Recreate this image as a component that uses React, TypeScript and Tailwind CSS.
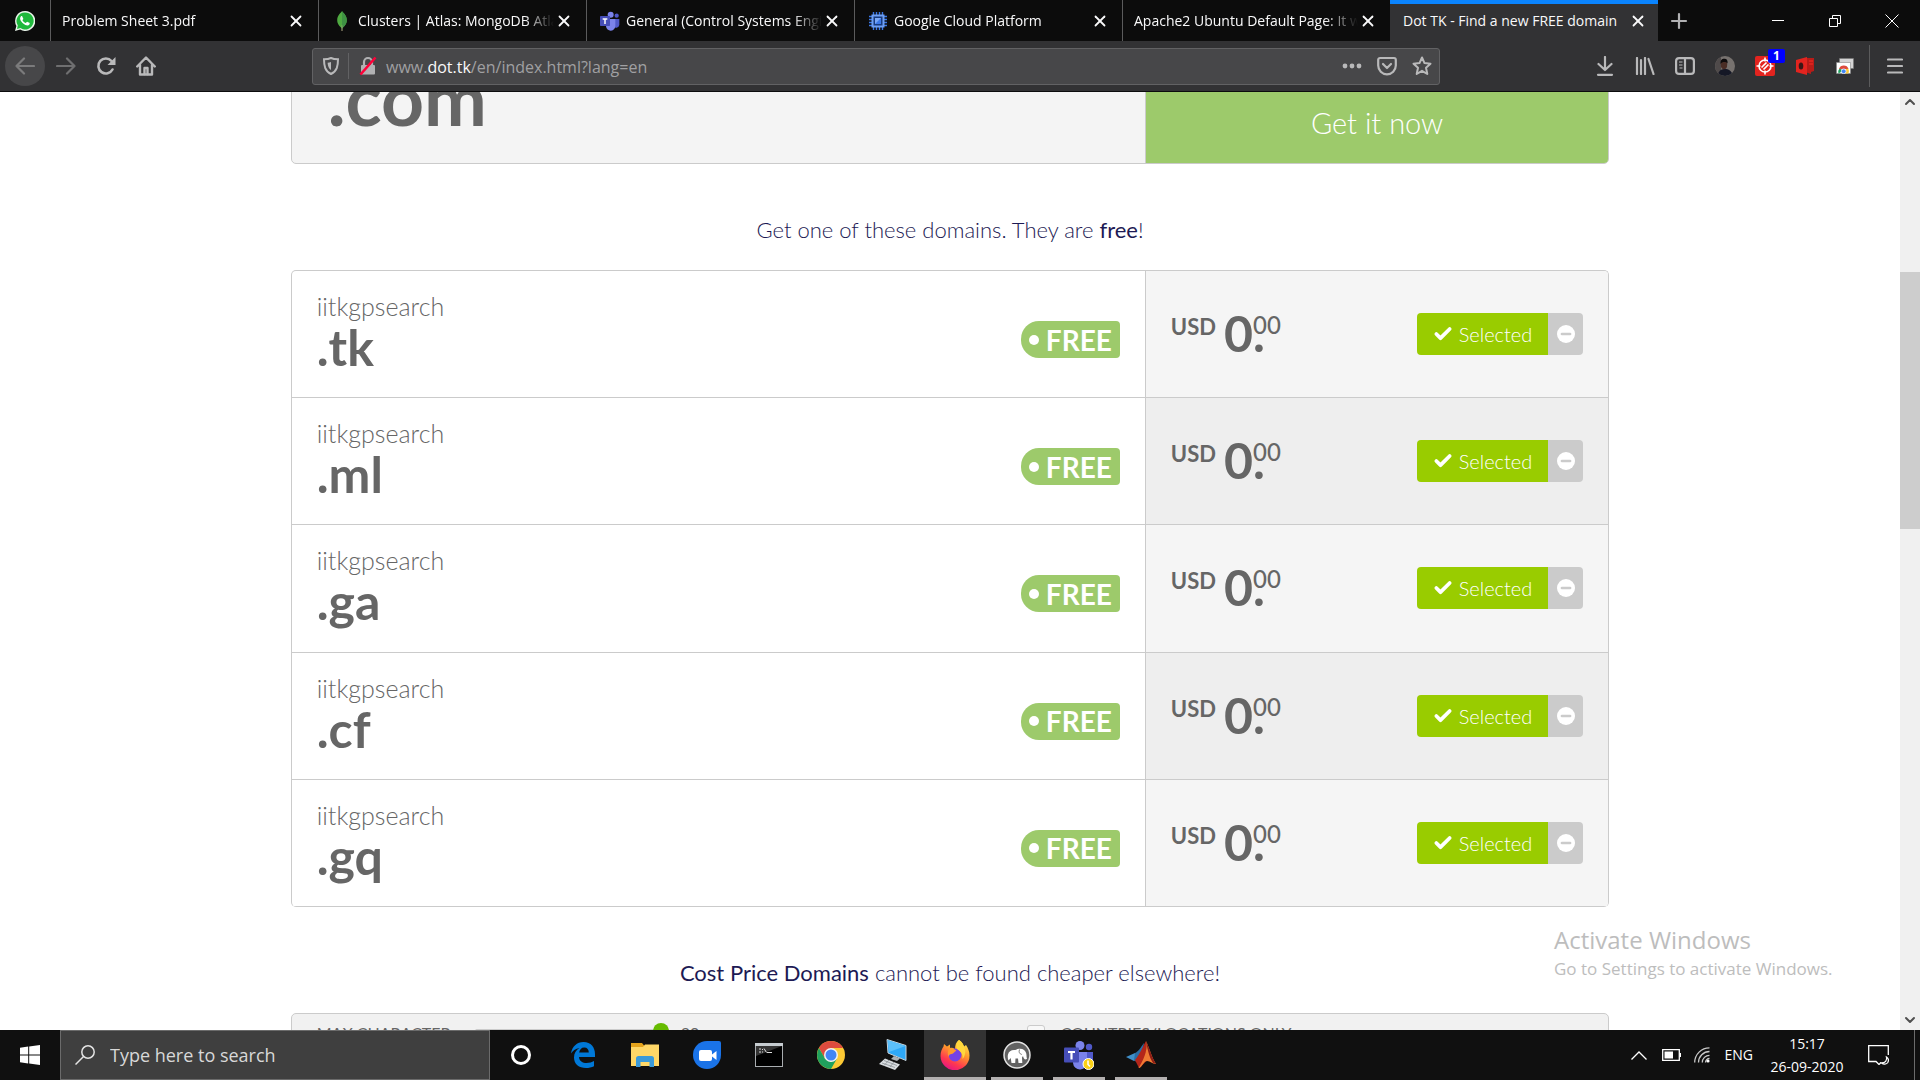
import type { ReactNode } from "react";
import { Check, X, Plus, Minus, ChevronUp, ChevronDown } from "lucide-react";

const UI = "font-['Open_Sans','Noto_Sans',sans-serif]";

function WhatsAppIcon() {
  return (
    <svg viewBox="0 0 20 20" className="size-5" aria-hidden="true">
      <path d="M10 0a10 10 0 0 0-8.600 15L0 20l5.200-1.400A10 10 0 1 0 10 0z" fill="#e9f5ea" />
      <path d="M10 1.500a8.500 8.500 0 0 0-7.200 13L2 18l3.500-.9A8.500 8.500 0 1 0 10 1.500z" fill="#1fb93c" />
      <path d="M7.300 5.400c-.3-.6-.9-.5-1.300-.1-2.100 2.300-.1 5.300 2.200 7.200 2.300 1.900 5 2.700 6.200.9.500-.8.400-1.400 0-1.600l-1.900-.9c-.4-.2-.7 0-1 .4-.6.900-.9.800-1.900.2C8.500 10.800 7.700 9.900 7.500 9.300c-.1-.5.900-1 .8-1.600z" fill="#fff" />
    </svg>
  );
}

function MongoIcon() {
  return (
    <svg viewBox="0 0 20 20" className="size-5" aria-hidden="true">
      <path d="M10 0c.8 1.700 4.800 4 4.800 9 0 4-2.300 6.200-4.300 7.900L10 20l-.5-3.100C7.500 15.200 5.200 13 5.200 9 5.200 4 9.200 1.700 10 0z" fill="#4faa41" />
      <path d="M10 0c.8 1.700 4.800 4 4.800 9 0 4-2.300 6.200-4.300 7.900L10 17z" fill="#3f9143" />
      <path d="M9.800 14h.4l.3 6h-1z" fill="#b8a78a" />
    </svg>
  );
}

function TeamsIcon({ large = false }: { large?: boolean }) {
  return (
    <svg viewBox="0 0 30 30" className={large ? "size-[30px]" : "size-5"} aria-hidden="true">
      <circle cx="16" cy="5.500" r="4.500" fill="#7b83eb" />
      <circle cx="25" cy="7" r="3.200" fill="#5059c9" />
      <path d="M20 12h9v9a5 5 0 0 1-9 2z" fill="#5059c9" />
      <path d="M9 12h14v10a7 7 0 0 1-14 1z" fill="#7b83eb" />
      <rect x="0" y="7.500" width="15" height="15" rx="1" fill="#464eb8" />
      <path d="M4 11h7v2H8.600v6.500H6.400V13H4z" fill="#fff" />
      {large && (
        <>
          <circle cx="24.500" cy="24" r="5.500" fill="#fcd116" stroke="#fff" strokeWidth="1" />
          <path d="M24 20.500v4l2 2" stroke="#fff" strokeWidth="1.500" fill="none" />
        </>
      )}
    </svg>
  );
}

function ChipIcon() {
  return (
    <svg viewBox="0 0 20 20" className="size-5" aria-hidden="true">
      <path d="M5.500 1v18M8.500 1v18M11.500 1v18M14.500 1v18M1 5.500h18M1 8.500h18M1 11.500h18M1 14.500h18" stroke="#3b78e7" strokeWidth="1.400" />
      <rect x="3.500" y="3.500" width="13" height="13" fill="#6f9ff2" />
      <rect x="5.500" y="5.500" width="9" height="9" fill="#173a7d" />
      <rect x="7" y="7" width="6" height="6" fill="#7aa7f5" />
      <path d="M13 7v6H7z" fill="#3b78e7" />
    </svg>
  );
}

function ChromeIcon({ className }: { className: string }) {
  return (
    <svg viewBox="0 0 28 28" className={className} aria-hidden="true">
      <circle cx="14" cy="14" r="14" fill="#fcc934" />
      <path d="M14 0A14 14 0 0 0 1.900 7L8 17.500 14 7h12.100A14 14 0 0 0 14 0z" fill="#dd4b3e" />
      <path d="M1.900 7A14 14 0 0 0 14 28l6-10.500L14 21l-6-3.500z" fill="#1fa15d" />
      <circle cx="14" cy="14" r="7" fill="#f1f1f1" />
      <circle cx="14" cy="14" r="5.500" fill="#4285f4" />
    </svg>
  );
}

type TabData = { title: string; icon?: ReactNode; active?: boolean };

const tabs: TabData[] = [
  { title: "Problem Sheet 3.pdf" },
  { title: "Clusters | Atlas: MongoDB Atlas", icon: <MongoIcon /> },
  { title: "General (Control Systems Engineering)", icon: <TeamsIcon /> },
  { title: "Google Cloud Platform", icon: <ChipIcon /> },
  { title: "Apache2 Ubuntu Default Page: It works" },
  { title: "Dot TK - Find a new FREE domain", active: true },
];

function Tab({ title, icon, active }: TabData) {
  return (
    <div
      className={
        active
          ? "flex w-[268px] min-w-0 items-center border-t-4 border-[#0a84ff] bg-[#323234] pr-[10px] pb-1 pl-[13px]"
          : "flex w-[268px] min-w-0 items-center border-l border-[#5b5b5c] pr-3 pl-[11px]"
      }
    >
      {icon && <span className="mr-1 flex w-6 shrink-0 justify-center">{icon}</span>}
      <span
        className={
          active
            ? "min-w-0 flex-1 overflow-hidden whitespace-nowrap"
            : "min-w-0 flex-1 overflow-hidden whitespace-nowrap [mask-image:linear-gradient(to_right,black_85%,transparent)]"
        }
      >
        {title}
      </span>
      <button type="button" aria-label={`Close ${title}`} className="flex w-5 shrink-0 justify-center">
        <X className="size-[18px]" strokeWidth={2.4} />
      </button>
    </div>
  );
}

function TabStrip() {
  return (
    <div className="flex h-[41px] shrink-0 bg-[#0c0c0c] text-sm text-[#f9f9fa]">
      <div className="flex w-[50px] items-center justify-center">
        <WhatsAppIcon />
      </div>
      {tabs.map((t) => (
        <Tab key={t.title} {...t} />
      ))}
      <button type="button" aria-label="New tab" className="flex w-[42px] items-center justify-center text-[#b1b1b3]">
        <Plus className="size-6" strokeWidth={2.2} />
      </button>
      <div className="ml-auto flex">
        <button type="button" aria-label="Minimize" className="flex w-[57px] items-center justify-center">
          <span className="h-px w-3 bg-white" />
        </button>
        <button type="button" aria-label="Restore" className="flex w-[57px] items-center justify-center">
          <svg viewBox="0 0 12 12" className="size-3" fill="none" stroke="#fff">
            <path d="M.5 3.500h8v8h-8zM3.500 3V.5h8v8H9" />
          </svg>
        </button>
        <button type="button" aria-label="Close window" className="flex w-[57px] items-center justify-center">
          <svg viewBox="0 0 14 14" className="size-3.5" stroke="#fff">
            <path d="m.5.5 13 13m0-13-13 13" />
          </svg>
        </button>
      </div>
    </div>
  );
}

function ToolButton({ label, children }: { label: string; children: ReactNode }) {
  return (
    <button type="button" aria-label={label} className="relative flex w-10 items-center justify-center">
      {children}
    </button>
  );
}

function Toolbar() {
  return (
    <div className="flex h-[51px] shrink-0 items-center border-b border-[#0c0c0d] bg-[#323234] pl-[5px] text-[#b9b9ba]">
      <button type="button" aria-label="Back" className="flex size-10 items-center justify-center rounded-full bg-[#474749] text-[#7b7b7c]">
        <svg viewBox="0 0 20 20" className="size-5" fill="none" stroke="currentColor" strokeWidth="2.200" strokeLinecap="round" strokeLinejoin="round">
          <path d="M19 10H1.500M9 2.500 1.500 10 9 17.500" />
        </svg>
      </button>
      <button type="button" aria-label="Forward" className="ml-px flex size-10 items-center justify-center text-[#6f6f70]">
        <svg viewBox="0 0 20 20" className="size-5" fill="none" stroke="currentColor" strokeWidth="2.200" strokeLinecap="round" strokeLinejoin="round">
          <path d="M1 10h17.500M11 2.500l7.500 7.500-7.500 7.500" />
        </svg>
      </button>
      <button type="button" aria-label="Reload" className="flex size-10 items-center justify-center">
        <svg viewBox="0 0 20 20" className="size-5" fill="none" stroke="currentColor" strokeWidth="2.600" strokeLinecap="round">
          <path d="M16.500 13.500A7.500 7.500 0 1 1 15.500 5" />
          <path d="M19.500 1v8h-8z" fill="currentColor" stroke="none" />
        </svg>
      </button>
      <button type="button" aria-label="Home" className="flex size-10 items-center justify-center">
        <svg viewBox="0 0 20 20" className="size-5" fill="none" stroke="currentColor" strokeWidth="2.400" strokeLinejoin="round" strokeLinecap="round">
          <path d="M1.200 10.500 10 1.500l8.800 9M4 8.500V18.500h12V8.500" />
          <path d="M8.500 18v-6h3v6" />
        </svg>
      </button>
      <div className="ml-[146px] flex h-[37px] min-w-0 flex-1 items-center rounded-[3px] border border-[#626264] bg-[#474749]">
        <span className="flex w-[35px] justify-center">
          <svg viewBox="0 0 16 18" className="h-[18px] w-4" fill="none" stroke="currentColor" strokeWidth="2">
            <path d="M8 1c2 1 4.500 1.300 7 1.300C15 9 14 14 8 17 2 14 1 9 1 2.300 3.500 2.300 6 2 8 1z" />
            <path d="M8 5v8c-2.300-1.500-3.200-4-3.400-7.200C5.800 5.700 7 5.400 8 5z" fill="currentColor" stroke="none" />
          </svg>
        </span>
        <span className="h-[26px] w-px bg-[#626264]" />
        <span className="flex w-[37px] justify-center">
          <svg viewBox="0 0 18 20" className="h-5 w-[18px]" fill="none">
            <rect x="2" y="9" width="14" height="9.500" rx="1" fill="#b1b1b3" />
            <path d="M5 9V6a4 4 0 0 1 8 0v3" stroke="#b1b1b3" strokeWidth="2.200" />
            <path d="M1.500 18.500 16.500 1.500" stroke="#ff0039" strokeWidth="2.600" />
          </svg>
        </span>
        <div className={`${UI} relative min-w-0 flex-1 pt-0.5 text-base text-[#a0a0a2]`}>
          <input
            type="text"
            aria-label="Address"
            className="absolute inset-0 w-full bg-transparent text-transparent outline-none"
          />
          <span>
            www.<span className="text-[#f9f9fa]">dot.tk</span>/en/index.html?lang=en
          </span>
        </div>
        <button type="button" aria-label="Page actions" className="flex w-[35px] justify-center">
          <svg viewBox="0 0 20 6" className="h-1.5 w-5" fill="currentColor">
            <circle cx="3" cy="3" r="2.400" />
            <circle cx="10" cy="3" r="2.400" />
            <circle cx="17" cy="3" r="2.400" />
          </svg>
        </button>
        <button type="button" aria-label="Save to Pocket" className="flex w-[35px] justify-center">
          <svg viewBox="0 0 20 20" className="size-5" fill="none" stroke="currentColor" strokeWidth="2.200" strokeLinecap="round" strokeLinejoin="round">
            <path d="M3 2h14a1.800 1.800 0 0 1 1.800 1.800V9.500a8.800 8.800 0 0 1-17.600 0V3.800A1.800 1.800 0 0 1 3 2z" />
            <path d="m6 8 4 4 4-4" />
          </svg>
        </button>
        <button type="button" aria-label="Bookmark this page" className="flex w-[35px] justify-center">
          <svg viewBox="0 0 20 20" className="size-5" fill="none" stroke="currentColor" strokeWidth="2" strokeLinejoin="round">
            <path d="m10 1.500 2.500 5.600 6 .6-4.500 4 1.300 6.300L10 14.800 4.700 18 6 11.700l-4.500-4 6-.6z" />
          </svg>
        </button>
      </div>
      <div className="ml-[145px] flex h-full">
        <ToolButton label="Downloads">
          <svg viewBox="0 0 18 20" className="h-5 w-[18px]" fill="none" stroke="currentColor" strokeWidth="2.200" strokeLinecap="round" strokeLinejoin="round">
            <path d="M9 1v12.500M2.500 8 9 14l6.500-6M2 18.800h14" />
          </svg>
        </ToolButton>
        <ToolButton label="Library">
          <svg viewBox="0 0 20 18" className="h-[18px] w-5" fill="none" stroke="currentColor" strokeWidth="2.200" strokeLinecap="round">
            <path d="M2 1v16M6 3v14M10 1v16M13.500 2l5 15" />
          </svg>
        </ToolButton>
        <ToolButton label="Sidebars">
          <svg viewBox="0 0 20 18" className="h-[18px] w-5" fill="none" stroke="currentColor" strokeWidth="2.200">
            <rect x="1.100" y="1.100" width="17.800" height="15.800" rx="3" />
            <path d="M10 1v16" />
            <path d="M4 5h3.500M4 8h3.500M4.500 11h3" strokeWidth="1.200" />
          </svg>
        </ToolButton>
        <ToolButton label="Account">
          <svg viewBox="0 0 20 20" className="size-5">
            <clipPath id="avatar">
              <circle cx="10" cy="10" r="10" />
            </clipPath>
            <g clipPath="url(#avatar)">
              <rect width="20" height="20" fill="#77726f" />
              <rect width="6" height="20" fill="#4f4a4a" />
              <path d="M3 20c0-5 3-6.500 6-7s8 1 9 7z" fill="#151826" />
              <ellipse cx="9" cy="8.500" rx="3.200" ry="4.800" fill="#4a2d25" />
              <path d="M5.600 8c-.4-4 1.400-5.300 3.600-5.300S13 4 12.500 7.500C11 5.500 7 5.500 5.600 8z" fill="#0d0b0c" />
            </g>
          </svg>
        </ToolButton>
        <ToolButton label="Blocker, 1 item">
          <svg viewBox="0 0 20 20" className="size-5" fill="none" stroke="#fff" strokeWidth="1.600">
            <rect width="20" height="20" rx="2" fill="#e3241f" stroke="none" />
            <circle cx="10" cy="10" r="6" />
            <path d="M10 1.500v4M10 14.500v4M1.500 10h4M14.500 10h4M6.500 11.500l5-5M8.500 13.500l5-5" />
          </svg>
          <span className={`${UI} absolute top-2 left-[23px] flex h-[14px] w-[17px] items-center justify-center rounded-[2px] bg-[#0000ff] text-xs font-bold text-white`}>
            1
          </span>
        </ToolButton>
        <ToolButton label="Office">
          <svg viewBox="0 0 18 18" className="size-[18px]">
            <path d="M9 1h9v13l-3 1v2l-6-2z" fill="#b81c18" />
            <path d="M0 3 11 0v18L0 15z" fill="#e3241f" />
            <ellipse cx="5" cy="9" rx="2.300" ry="3.600" fill="#3b1716" />
            <path d="M13 4h4M13 7h4" stroke="#e3241f" strokeWidth="1.500" />
          </svg>
        </ToolButton>
        <ToolButton label="Store">
          <svg viewBox="0 0 18 16" className="h-4 w-[18px]">
            <path d="M3.500.5h14v10h-14z" fill="#d4d4d4" stroke="#777" strokeWidth=".6" />
            <path d="M.5 4.500h14v11H.5z" fill="#fff" stroke="#888" strokeWidth=".6" />
            <path d="M2.500 15.500a5.200 5.200 0 0 1 1-5l4 2z" fill="#1fa15d" />
            <path d="M3 11a5 5 0 0 1 9.500 0H7.500z" fill="#dd4b3e" />
            <path d="M12.300 10.800a5.500 5.500 0 0 1 .2 4.700H9l1-4.500z" fill="#fcc934" />
            <circle cx="7.700" cy="13.300" r="2.400" fill="#4285f4" stroke="#fff" strokeWidth=".7" />
          </svg>
        </ToolButton>
        <span className="ml-1 h-[42px] w-px self-center bg-[#5b5b5c]" />
        <button type="button" aria-label="Open menu" className="flex w-[50px] items-center justify-center">
          <svg viewBox="0 0 16 16" className="size-4" stroke="currentColor" strokeWidth="2.200" strokeLinecap="round">
            <path d="M1 1.500h14M1 8h14M1 14.500h14" />
          </svg>
        </button>
      </div>
    </div>
  );
}

const domains = [".tk", ".ml", ".ga", ".cf", ".gq"];

function DomainRow({ ext, shaded }: { ext: string; shaded: boolean }) {
  return (
    <div className="flex border-b border-[#cbcbcb]">
      <div className="flex min-w-0 flex-1 justify-between px-[25px]">
        <div className="pt-[19px]">
          <div className="text-[25px] leading-8 font-light">iitkgpsearch</div>
          <div className="text-[50px] leading-[50px] font-bold">{ext}</div>
        </div>
        <div className="mt-[50px] flex h-[37px] items-center rounded-l-[18px] rounded-r-[4px] bg-[#9dca6b] px-2 text-[28px] font-bold text-white">
          <span className="mr-[7px] size-2.5 rounded-full bg-white" />
          FREE
        </div>
      </div>
      <div className={shaded ? "flex w-[35.2%] justify-between border-l border-[#cbcbcb] bg-[#eee] px-[25px]" : "flex w-[35.2%] justify-between border-l border-[#cbcbcb] bg-[#f5f5f5] px-[25px]"}>
        <div className="flex items-start pt-[38px] font-bold">
          <span className="mr-2 text-[22px] leading-9">USD</span>
          <span className="text-[50px] leading-[48px]">0</span>
          <span className="relative text-[50px] leading-[48px]">
            .<sup className="absolute top-0 left-0 text-2xl leading-8 font-medium">00</sup>
          </span>
        </div>
        <div className="mt-[42px] flex h-[42px]">
          <button type="button" className="flex items-center rounded-l-[4px] bg-[#99cc00] px-4 text-xl font-light text-white">
            <Check className="mr-1.5 size-5" strokeWidth={4.5} />
            Selected
          </button>
          <button type="button" aria-label={`Remove iitkgpsearch${ext}`} className="flex w-[35px] items-center justify-center rounded-r-[4px] bg-[#cbcbcb]">
            <span className="flex size-[18px] items-center justify-center rounded-full bg-white text-[#cbcbcb]">
              <Minus className="size-3.5" strokeWidth={4.5} />
            </span>
          </button>
        </div>
      </div>
    </div>
  );
}

function PageContent() {
  return (
    <main className="flex min-h-0 flex-1 overflow-hidden bg-white">
      <div className="min-w-0 flex-1 overflow-hidden font-['Lato',sans-serif] text-[#666]">
        <div className="mx-auto w-[69.4%]">
          <div className="-mt-[128px] flex h-[200px] rounded-[5px] border border-[#cbcbcb] bg-[#f4f4f4]">
            <div className="flex flex-1 items-end pb-7 pl-9 text-[75px] leading-[75px] font-bold">.com</div>
            <button type="button" className="w-[35.2%] rounded-r-[4px] border-l border-[#cbcbcb] bg-[#9dca6b] pt-[118px] text-[29px] font-light text-white">
              Get it now
            </button>
          </div>

          <h2 className="pt-[50px] pb-6 text-center text-[22px] leading-8 font-light text-[#1d1a54]">
            Get one of these domains. They are <b>free</b>!
          </h2>

          <div className="grid min-h-[637px] auto-rows-fr overflow-hidden rounded-[5px] border-x border-t border-[#cbcbcb]">
            {domains.map((ext, i) => (
              <DomainRow key={ext} ext={ext} shaded={i % 2 === 1} />
            ))}
          </div>

          <h2 className="pt-[50px] pb-6 text-center text-[22px] leading-8 font-light text-[#1d1a54]">
            <b>Cost Price Domains</b> cannot be found cheaper elsewhere!
          </h2>

          <div className="flex h-[60px] items-start rounded-t-[5px] border border-[#cbcbcb] bg-[#f1f1f1] pt-[11px] pl-[25px] text-base leading-4">
            <label htmlFor="max-character" className="w-[158px]">
              MAX CHARACTER
            </label>
            <input
              id="max-character"
              type="range"
              min={1}
              max={20}
              defaultValue={20}
              className="mt-1 h-1 w-[194px] appearance-none rounded bg-[#cbcbcb] [&::-webkit-slider-thumb]:size-4 [&::-webkit-slider-thumb]:appearance-none [&::-webkit-slider-thumb]:rounded-full [&::-webkit-slider-thumb]:bg-[#66bb00]"
            />
            <output className="ml-3 w-[346px]">20</output>
            <input id="countries" type="checkbox" className="mr-4 size-[18px] appearance-none rounded-[3px] border border-[#cbcbcb] bg-[#f8f8f8]" />
            <label htmlFor="countries">COUNTRIES/LOCATIONS ONLY</label>
          </div>
        </div>
      </div>
      <div className="flex w-5 shrink-0 flex-col items-center bg-[#f0f0f0] text-[#505050]">
        <ChevronUp className="my-0.5 size-4" strokeWidth={3} />
        <div className="mt-[160px] h-[257px] w-full bg-[#cdcdcd]" />
        <ChevronDown className="mt-auto mb-0.5 size-4" strokeWidth={3} />
      </div>
    </main>
  );
}

function EdgeIcon() {
  return (
    <svg viewBox="0 0 26 26" className="size-[26px]">
      <path d="M1 11.500C2 4.500 7 0 13.500 0 21 0 25 5.500 25 12v3H9c.3 4 3.600 6 7.500 6 2.900 0 5.500-.8 7.500-2v5.200c-2.300 1.200-5.300 1.800-8 1.800C8.800 26 4 22 4 15.500c0-4 2-7.500 5.500-9.500C5.500 6.500 2.500 9 1 11.500zM9.200 10.500h9.600c0-3-1.500-5-4.600-5-2.800 0-4.600 2-5 5z" fill="#0078d7" />
    </svg>
  );
}

function FolderIcon() {
  return (
    <svg viewBox="0 0 28 24" className="h-6 w-7">
      <path d="M0 0h11l2.500 3H28v20H0z" fill="#e5a31b" />
      <path d="M0 4h12l2-2.500h14V23H0z" fill="#ffd767" />
      <path d="M5 24v-8.500a2.500 2.500 0 0 1 2.500-2.500h13a2.500 2.500 0 0 1 2.500 2.500V24h-4.500v-5h-9v5z" fill="#3b9ad9" />
    </svg>
  );
}

function DuoIcon() {
  return (
    <svg viewBox="0 0 28 28" className="size-7">
      <path d="M14 0h12a2 2 0 0 1 2 2v12A14 14 0 1 1 14 0z" fill="#1a73e8" />
      <rect x="6" y="9" width="13" height="11" rx="2" fill="#fff" />
      <path d="m19 13.500 4.500-3.500v9L19 15.500z" fill="#fff" />
    </svg>
  );
}

function TerminalIcon() {
  return (
    <svg viewBox="0 0 28 24" className="h-6 w-7">
      <rect x=".5" y=".5" width="27" height="23" fill="#000" stroke="#a9adb0" />
      <path d="M0 0h28v3H0z" fill="#c6ccd0" />
      <path d="M1 3h26L1 13z" fill="#333" />
      <path d="M4 6h2M4 9h2M7.500 6v1M7.500 8.500v1M9 5.500l2.500 4M12 9.500h5" stroke="#ddd" fill="none" />
    </svg>
  );
}

function ComputerIcon() {
  return (
    <svg viewBox="0 0 28 32" className="h-8 w-7">
      <path d="m8 .5 19 6v15L9 14z" fill="#2ea8f7" stroke="#c9d3da" strokeWidth="1" />
      <path d="m8.500 1 18 6L10 13z" fill="#5bc0fb" />
      <path d="m15 17 6 2.500-3 2.500-6-2z" fill="#aab1b6" />
      <path d="m6 19.500 15 6-5 5.500-16-6z" fill="#d9dde0" />
      <path d="m5 21.500 13 5M3 24l13 4.500M10 21l-5 5.500M15 23l-4 5" stroke="#8a9196" strokeWidth=".8" />
    </svg>
  );
}

function FirefoxIcon() {
  return (
    <svg viewBox="0 0 30 30" className="size-[30px]">
      <defs>
        <linearGradient id="fox" x1=".8" y1="0" x2=".3" y2="1">
          <stop offset="0" stopColor="#fff44f" />
          <stop offset=".4" stopColor="#ff9a2b" />
          <stop offset=".75" stopColor="#ff3750" />
          <stop offset="1" stopColor="#e31587" />
        </linearGradient>
      </defs>
      <path d="M19 0c3 2 4.500 4.500 5 6.500L26 5c2 3 3.500 6.500 3.500 10.500A14.500 14.500 0 0 1 .5 16C.5 12 2 8.500 3.500 6.500L4 4l3 2.500 3-2v3.500c2-.5 3.500 0 5 1 0-4 1-7 4-9z" fill="url(#fox)" />
      <circle cx="15" cy="15" r="6.500" fill="#7542e5" />
      <path d="M9 9c3-1 6 0 7.500 2-2 0-2 2.500-5 3-1.500.3-2.800 1-3 3-1-2.500-1-6 .5-8z" fill="#ff9a2b" />
      <path d="M19 0c3 2 4.500 4.500 5 6.500 2.500 4.500 1 10-1.500 12.500 1-6-3-8-5.500-10-1.500-3 0-7 2-9z" fill="#ffd83c" />
    </svg>
  );
}

function ElephantIcon() {
  return (
    <svg viewBox="0 0 28 28" className="size-7">
      <circle cx="14" cy="14" r="13" fill="#626262" stroke="#e4e4e4" strokeWidth="1.500" />
      <path d="M5.500 19.500c-.8-2-1-4-.5-6 .6-3 3-4.500 6-4.500 2 0 3-1.200 5-1.200 3.500-.5 6.500 1.500 7.200 4.500.5 2 .2 4 .8 5.700l-2 .5c-1.200-.8-1.700-2-2-3.500l-1 1.500.3 5.500h-3.800l-.5-4.500h-2.500l-.3 4.500H8.500l-.8-5z" fill="#fff" />
      <path d="M16.500 8.500c-1 2.500 0 4.500 2.300 5" stroke="#626262" strokeWidth=".8" fill="none" />
    </svg>
  );
}

function MatlabIcon() {
  return (
    <svg viewBox="0 0 30 28" className="h-7 w-[30px]">
      <path d="m0 16 9-4 4.500 4L8 20z" fill="#3f8fc9" />
      <path d="M9 12c3-1 6-6 9-10l-2 13-5 6-3-1.500z" fill="#2b6ea6" />
      <path d="M20 0c-3 5-6 13-11 19l4 8c3-1 5-6 8-7z" fill="#b3261a" />
      <path d="M20 0c1 8 .5 14-7.500 27 3 .5 5-7 8.500-7s5 3 9 3C26 17 23 6 20 0z" fill="#ee7a33" />
      <path d="M20 0c3 6 6 17 10 23l-3-1C23 16 21 6 20 0z" fill="#8f1d16" />
    </svg>
  );
}

const apps: { name: string; icon: ReactNode; state?: "active" | "open" }[] = [
  {
    name: "Cortana",
    icon: <span className="size-5 rounded-full border-[3px] border-white" />,
  },
  { name: "Edge", icon: <EdgeIcon /> },
  { name: "File Explorer", icon: <FolderIcon /> },
  { name: "Duo", icon: <DuoIcon /> },
  { name: "Command Prompt", icon: <TerminalIcon /> },
  { name: "Chrome", icon: <ChromeIcon className="size-7" /> },
  { name: "Remote Desktop", icon: <ComputerIcon /> },
  { name: "Firefox", icon: <FirefoxIcon />, state: "active" },
  { name: "WampServer", icon: <ElephantIcon />, state: "open" },
  { name: "Teams", icon: <TeamsIcon large />, state: "open" },
  { name: "MATLAB", icon: <MatlabIcon />, state: "open" },
];

function Taskbar() {
  return (
    <footer className={`${UI} flex h-[50px] shrink-0 bg-[#101010] text-white`}>
      <button type="button" aria-label="Start" className="flex w-[60px] items-center justify-center">
        <svg viewBox="0 0 20 20" className="size-5" fill="#fff">
          <path d="M0 2.800 8.200 1.600v7.900H0zM9.200 1.400 20 0v9.500H9.200zM0 10.500h8.200v7.900L0 17.200zM9.200 10.500H20V20L9.200 18.600z" />
        </svg>
      </button>
      <div className="flex w-[430px] items-center border border-[#6b6b6b] bg-[#3f3f3f] pl-[14px]">
        <svg viewBox="0 0 20 20" className="mr-[15px] size-5 shrink-0" fill="none" stroke="#e4e4e4" strokeWidth="1.500">
          <circle cx="13" cy="7" r="6.200" />
          <path d="M8.500 11.500.5 19.500" />
        </svg>
        <input type="text" aria-label="Search" placeholder="Type here to search" className="min-w-0 flex-1 bg-transparent text-lg outline-none placeholder:text-[#d8d8d8]" />
      </div>
      {apps.map(({ name, icon, state }) => (
        <button
          key={name}
          type="button"
          aria-label={name}
          className={state === "active" ? "relative flex w-[62px] items-center justify-center bg-[#333]" : "relative flex w-[62px] items-center justify-center"}
        >
          {icon}
          {state && <span className={state === "active" ? "absolute inset-x-0 bottom-0 h-[3px] bg-[#b3b0b0]" : "absolute inset-x-[5px] bottom-0 h-[3px] bg-[#b3b0b0]"} />}
        </button>
      ))}
      <div className="ml-auto flex items-center">
        <svg viewBox="0 0 16 9" className="mr-[15px] h-[9px] w-4" fill="none" stroke="#fff" strokeWidth="1.300">
          <path d="m.5 8.500 7.500-7.500 7.500 7.500" />
        </svg>
        <svg viewBox="0 0 20 12" className="mr-[12px] h-3 w-5">
          <path d="M.7.700h16.600v10.600H.7z" fill="none" stroke="#fff" strokeWidth="1.300" />
          <path d="M2.500 2.500H11v7H2.500zM17.500 4H19v4h-1.500z" fill="#fff" />
        </svg>
        <svg viewBox="0 0 16 16" className="mr-[15px] size-4" fill="none" stroke="#c9c9c9" strokeWidth="1.300">
          <path d="M.7 15.500A14.800 14.800 0 0 1 15.500.8M4.500 15.500a11 11 0 0 1 11-11M8.300 15.500a7.200 7.200 0 0 1 7.200-7.200M11.500 15.500a4 4 0 0 1 4-4" />
          <circle cx="14" cy="14" r="1.600" fill="#fff" stroke="none" />
        </svg>
        <span className="text-sm">ENG</span>
        <div className="ml-4 w-[76px] text-center text-sm leading-[23px] whitespace-nowrap">
          <div>15:17</div>
          <div>26-09-2020</div>
        </div>
        <svg viewBox="0 0 22 20" className="ml-[23px] h-5 w-[22px]" fill="none" stroke="#fff" strokeWidth="1.300">
          <path d="M13 17.500 11 19.500 8 16.500H.7V.700h19.600v9.300" />
          <path d="M18.500 12c1 3.500-1.500 6-5 6 2 1.500 5 1.500 6.300-.5 1.200-2 .7-4.500-1.300-5.500z" />
        </svg>
        <span className="ml-6 h-[50px] w-px bg-[#6b6b6b]" />
        <span className="w-[5px]" />
      </div>
    </footer>
  );
}

export default function App() {
  return (
    <div className={`${UI} flex h-screen flex-col overflow-hidden`}>
      <TabStrip />
      <Toolbar />
      <PageContent />
      <Taskbar />
      <div className="pointer-events-none absolute right-[81px] bottom-[98px] w-[285px] whitespace-nowrap text-[#bdbdbd]">
        <div className="text-2xl leading-8">Activate Windows</div>
        <div className="text-[17px] leading-[26px]">Go to Settings to activate Windows.</div>
      </div>
    </div>
  );
}
